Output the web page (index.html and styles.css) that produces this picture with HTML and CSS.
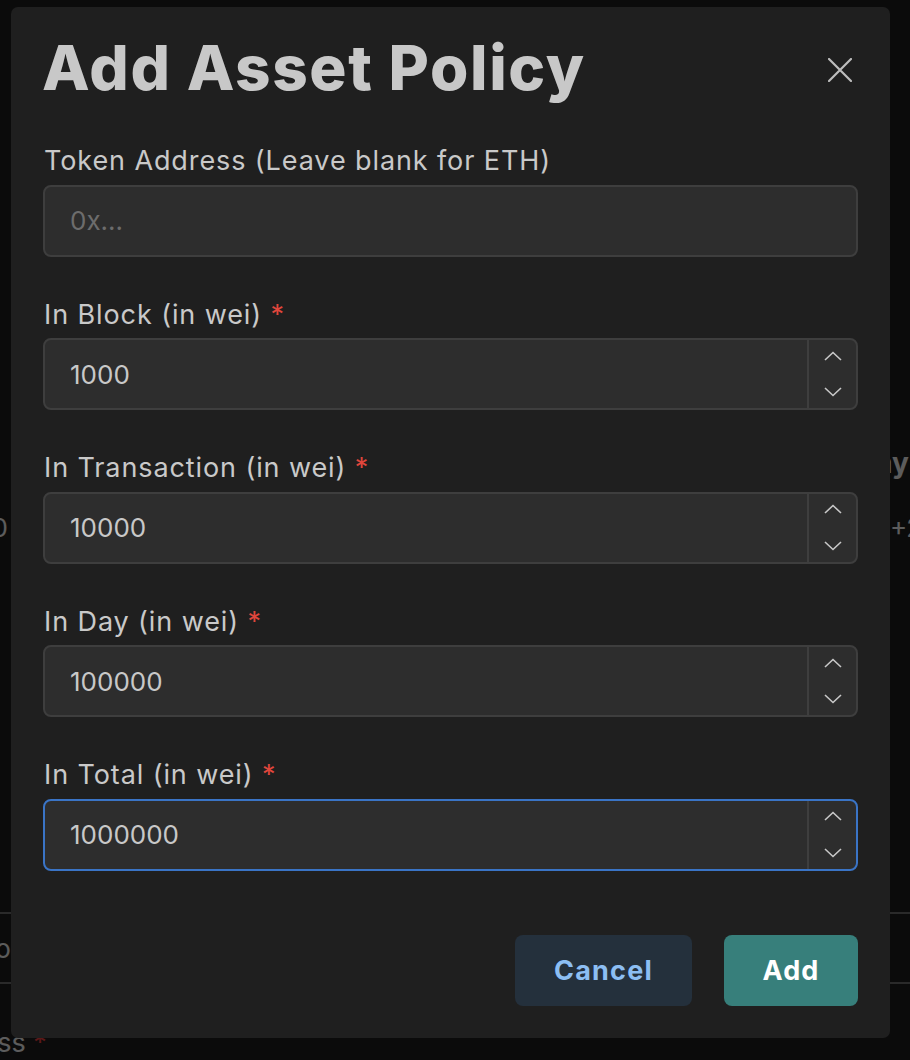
FILE: index.html
```html
<!DOCTYPE html>
<html>
<head>
<meta charset="utf-8">
<link rel="stylesheet" href="styles.css">
</head>
<body>
<div class="bg">
  <div class="bg-row bg-head"><span class="bg-left"></span><span class="bg-right">Day</span></div>
  <div class="bg-row bg-cell"><span class="bg-left">1000</span><span class="bg-right bg-plus">+2</span></div>
  <div class="bg-box"><span class="bg-box-text">Info</span></div>
  <div class="bg-label">Address <span class="bg-req">*</span></div>
</div>

<div class="overlay">
  <div class="modal">
    <h1 class="title">Add Asset Policy</h1>
    <button class="close" aria-label="Close">
      <svg width="24" height="24" viewBox="0 0 24 24"><path d="M1 1L23 23M23 1L1 23" stroke="#bdbdbd" stroke-width="2.2" stroke-linecap="round" fill="none"/></svg>
    </button>
    <div class="fields">
      <div class="field">
        <label class="label">Token Address (Leave blank for ETH)</label>
        <input class="input" type="text" placeholder="0x...">
      </div>
      <div class="field">
        <label class="label">In Block (in wei) <span class="req">*</span></label>
        <div class="num">
          <input class="num-input" type="text" value="1000">
          <div class="stepper">
            <span class="step up"><svg width="18" height="10" viewBox="0 0 18 10"><path d="M1 9L9 1.5L17 9" stroke="#c8c8c8" stroke-width="1.6" fill="none"/></svg></span>
            <span class="step down"><svg width="18" height="10" viewBox="0 0 18 10"><path d="M1 1L9 8.5L17 1" stroke="#c8c8c8" stroke-width="1.6" fill="none"/></svg></span>
          </div>
        </div>
      </div>
      <div class="field">
        <label class="label">In Transaction (in wei) <span class="req">*</span></label>
        <div class="num">
          <input class="num-input" type="text" value="10000">
          <div class="stepper">
            <span class="step up"><svg width="18" height="10" viewBox="0 0 18 10"><path d="M1 9L9 1.5L17 9" stroke="#c8c8c8" stroke-width="1.6" fill="none"/></svg></span>
            <span class="step down"><svg width="18" height="10" viewBox="0 0 18 10"><path d="M1 1L9 8.5L17 1" stroke="#c8c8c8" stroke-width="1.6" fill="none"/></svg></span>
          </div>
        </div>
      </div>
      <div class="field">
        <label class="label">In Day (in wei) <span class="req">*</span></label>
        <div class="num">
          <input class="num-input" type="text" value="100000">
          <div class="stepper">
            <span class="step up"><svg width="18" height="10" viewBox="0 0 18 10"><path d="M1 9L9 1.5L17 9" stroke="#c8c8c8" stroke-width="1.6" fill="none"/></svg></span>
            <span class="step down"><svg width="18" height="10" viewBox="0 0 18 10"><path d="M1 1L9 8.5L17 1" stroke="#c8c8c8" stroke-width="1.6" fill="none"/></svg></span>
          </div>
        </div>
      </div>
      <div class="field">
        <label class="label">In Total (in wei) <span class="req">*</span></label>
        <div class="num focused">
          <input class="num-input" type="text" value="1000000">
          <div class="stepper">
            <span class="step up"><svg width="18" height="10" viewBox="0 0 18 10"><path d="M1 9L9 1.5L17 9" stroke="#c8c8c8" stroke-width="1.6" fill="none"/></svg></span>
            <span class="step down"><svg width="18" height="10" viewBox="0 0 18 10"><path d="M1 1L9 8.5L17 1" stroke="#c8c8c8" stroke-width="1.6" fill="none"/></svg></span>
          </div>
        </div>
      </div>
    </div>
    <div class="actions">
      <button class="btn cancel">Cancel</button>
      <button class="btn add">Add</button>
    </div>
  </div>
</div>
</body>
</html>
```

FILE: styles.css
```css
* { box-sizing: border-box; }
html, body { margin: 0; padding: 0; }
body {
  width: 910px;
  height: 1060px;
  overflow: hidden;
  background: #1c1c1c;
  font-family: Inter, "Liberation Sans", sans-serif;
}

/* background page (dimmed behind the modal) */
.bg {
  width: 1100px;
  margin-left: -52px;
  padding-top: 446px;
  color: #e6e6e6;
}
.bg-row {
  display: flex;
  justify-content: space-between;
  font-size: 28px;
}
.bg-head { font-weight: 700; height: 38px; }
.bg-cell { margin-top: 28px; height: 36px; font-size: 26px; }
.bg-left { width: 200px; }
.bg-right { width: 200px; padding-left: 8px; }
.bg-plus { padding-left: 42px; }
.bg-box {
  margin-top: 364px;
  margin-left: -20px;
  height: 72px;
  border-top: 2px solid #6a6a6a;
  border-bottom: 2px solid #6a6a6a;
  display: flex;
  align-items: center;
  font-size: 26px;
}
.bg-box-text { margin-left: 36px; }
.bg-label {
  margin-top: 44px;
  margin-left: -28px;
  font-size: 27px;
  line-height: 30px;
}
.bg-req { color: #e53e3e; }

/* overlay + modal */
.overlay {
  position: fixed;
  inset: 0;
  background: rgba(0, 0, 0, 0.6);
  padding: 7px 20px 0 11px;
}
.modal {
  position: relative;
  width: 879px;
  height: 1031px;
  background: #1f1f1f;
  border-radius: 7px;
  padding: 23px 32px 32px 32px;
  display: flex;
  flex-direction: column;
}
.title {
  margin: 0 0 0 -1px;
  font-size: 62px;
  line-height: 76px;
  font-weight: 800;
  color: #c8c8c8;
  letter-spacing: 1.6px;
}
.close {
  position: absolute;
  top: 51px;
  right: 38px;
  width: 24px;
  height: 24px;
  padding: 0;
  border: 0;
  background: transparent;
  display: flex;
}
.fields {
  margin-top: 37px;
  display: flex;
  flex-direction: column;
  gap: 40px;
}
.field {
  display: flex;
  flex-direction: column;
  gap: 5.5px;
}
.label {
  margin-left: 1px;
  font-size: 27px;
  line-height: 36px;
  color: #c9c9c9;
  letter-spacing: 0.9px;
}
.req { color: #e0463c; }
.input, .num {
  height: 72px;
  flex: none;
  border: 2px solid #3e3e3e;
  border-radius: 8px;
  background: #2d2d2d;
}
.input {
  width: 100%;
  padding: 0 25px;
  font-family: inherit;
  font-size: 26px;
  color: #c8c8c8;
  outline: none;
}
.input::placeholder { color: #6c6c6c; }
.num {
  display: flex;
}
.num.focused { border-color: #3a74c6; }
.num-input {
  flex: 1;
  min-width: 0;
  border: 0;
  background: transparent;
  padding: 0 25px;
  font-family: inherit;
  font-size: 26px;
  color: #c8c8c8;
  outline: none;
}
.stepper {
  width: 49px;
  border-left: 2px solid #3e3e3e;
  display: flex;
  flex-direction: column;
}
.step {
  flex: 1;
  display: flex;
  align-items: center;
  justify-content: center;
}
.step.down { padding-top: 5px; }
.actions {
  margin-top: auto;
  display: flex;
  justify-content: flex-end;
  gap: 32px;
}
.btn {
  height: 71px;
  border: 0;
  border-radius: 8px;
  font-family: inherit;
  font-size: 27px;
  font-weight: 700;
  letter-spacing: 1.2px;
}
.cancel {
  width: 177px;
  background: #24303c;
  color: #8cbef3;
}
.add {
  width: 134px;
  background: #377f7b;
  color: #ffffff;
}
```
